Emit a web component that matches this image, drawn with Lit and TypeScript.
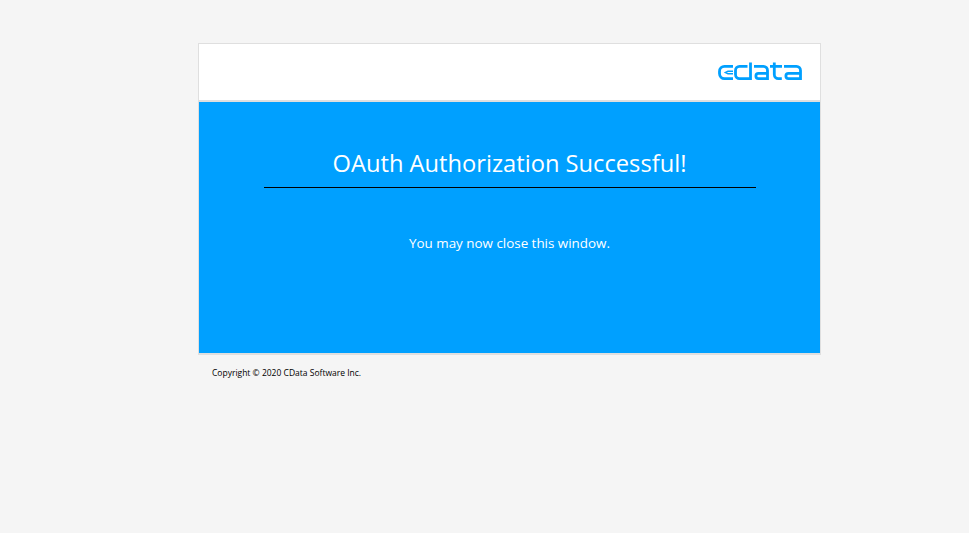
import { LitElement, html, css } from "lit";
import { customElement } from "lit/decorators.js";

@customElement("app-root")
export class AppRoot extends LitElement {
  static styles = css`
    :host {
      display: block;
      min-height: 533px;
      background: #f5f5f5;
      font-family: "Open Sans", "Noto Sans", sans-serif;
      overflow: hidden;
    }
    .wrap {
      width: 623px;
      margin-left: 198px;
      padding-top: 43px;
    }
    .card {
      border: 1px solid #dfdfdf;
      border-bottom-width: 2px;
      box-sizing: border-box;
      background: #fff;
    }
    .head {
      height: 58px;
      box-sizing: border-box;
      border-bottom: 2px solid #dfdfdf;
      display: flex;
      justify-content: flex-end;
      align-items: flex-start;
      padding: 18px 18px 0 0;
    }
    .logo {
      display: block;
      width: 85px;
      height: 19px;
    }
    .body {
      height: 251px;
      box-sizing: border-box;
      background: #00a0ff;
      color: #fff;
      display: flex;
      flex-direction: column;
      align-items: center;
      padding-top: 43px;
    }
    h1 {
      margin: 0;
      width: 492px;
      height: 43px;
      box-sizing: border-box;
      border-bottom: 1px solid #000;
      font-size: 23.7px;
      line-height: 37px;
      font-weight: 400;
      text-align: center;
    }
    p {
      margin: 45px 0 0;
      font-size: 13.4px;
      line-height: 20px;
      text-align: center;
    }
    .foot {
      padding: 11px 0 0 14px;
      font-size: 8.5px;
      line-height: 14px;
      color: #000;
    }
  `;

  render() {
    return html`
      <div class="wrap">
        <div class="card">
          <div class="head">
            <svg class="logo" viewBox="0 0 85 19" fill="none" stroke="#00a0ff" stroke-width="2.800">
              <path d="M16 4.400H7.500a5 5 0 0 0-5 5v2.200a5 5 0 0 0 5 5H16" />
              <path d="M16 9.200H11l-2.500 1.300 2.500 1.300h5" stroke-width="1.600" />
              <path d="M33.500 0.500V16.600H22.500a4 4 0 0 1-4-4V8.400a4 4 0 0 1 4-4h8" />
              <path d="M37 4.400h9.500a4 4 0 0 1 4 4v8.200H41.500a2.600 2.600 0 0 1 0-5.200h9" />
              <path d="M57.300 0.500V12.600a4 4 0 0 0 4 4h3.500M53 4.400h12" />
              <path d="M67 4.400h12.500a4 4 0 0 1 4 4v8.200H71.500a2.600 2.600 0 0 1 0-5.200h12" />
            </svg>
          </div>
          <div class="body">
            <h1>OAuth Authorization Successful!</h1>
            <p>You may now close this window.</p>
          </div>
        </div>
        <div class="foot">Copyright © 2020 CData Software Inc.</div>
      </div>
    `;
  }
}
